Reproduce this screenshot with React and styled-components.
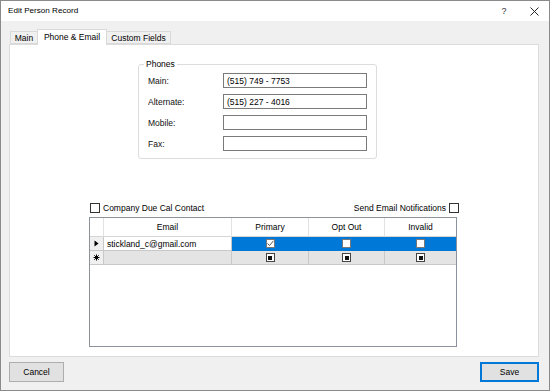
import React from "react";
import styled, { createGlobalStyle } from "styled-components";

const Global = createGlobalStyle`
  html, body { margin: 0; padding: 0; background: #fff; }
  body { font-family: "Liberation Sans", Arial, sans-serif; font-size: 8.5px; color: #000; }
  * { box-sizing: border-box; }
`;

const Win = styled.div`
  width: 550px; height: 391px; border: 1px solid #8a8a8a; background: #f0f0f0;
  display: flex; flex-direction: column;
`;
const TitleBar = styled.div`
  height: 20px; background: #fff; display: flex; align-items: center; padding: 0 0 0 7px;
  font-size: 8.1px; color: #000;
`;
const TitleText = styled.div` flex: 1; padding-bottom: 1px; `;
const TitleBtn = styled.div`
  width: 30px; display: flex; justify-content: center; align-items: center; font-size: 9px; color: #333;
`;
const Body = styled.div`
  flex: 1; display: flex; flex-direction: column; padding: 8px 10px 0 8px;
`;
const TabStrip = styled.div` display: flex; align-items: flex-end; height: 15px; padding-left: 1px; `;
const Tab = styled.div`
  height: ${p => (p.$active ? 16 : 13)}px;
  margin-bottom: ${p => (p.$active ? -1 : 0)}px;
  width: ${p => p.$w}px;
  border: 1px solid #d9d9d9; border-bottom: ${p => (p.$active ? "none" : "1px solid #d9d9d9")};
  margin-left: ${p => (p.$first ? 0 : -1)}px;
  background: ${p => (p.$active ? "#fff" : "#f0f0f0")};
  display: flex; align-items: center; justify-content: center;
  font-size: 8.5px; position: relative; z-index: ${p => (p.$active ? 2 : 1)};
  padding-bottom: ${p => (p.$active ? 2 : 0)}px;
`;
const Panel = styled.div`
  height: 313px; background: #fff; border: 1px solid #dcdcdc; position: relative; z-index: 1;
  display: flex; flex-direction: column;
`;
const Group = styled.fieldset`
  margin: 14px 0 0 128px; width: 239px; height: 100px; border: 1px solid #dcdcdc; border-radius: 3px;
  padding: 4px 0 0 9px; display: flex; flex-direction: column; gap: 6px;
`;
const Legend = styled.legend` padding: 0 2px; margin-left: -4px; font-size: 8.5px; color: #000; `;
const FieldRow = styled.div` display: flex; align-items: center; height: 15px; `;
const Label = styled.div` width: 75px; font-size: 8.5px; color: #111; `;
const Input = styled.div`
  width: 144px; height: 15px; border: 1px solid #7a7a7a; font-size: 8.5px;
  display: flex; align-items: center; padding-left: 3px;
`;
const CheckRow = styled.div`
  margin: 42px 0 0 80px; width: 369px; display: flex; justify-content: space-between; align-items: center;
  height: 13px;
`;
const CheckLabel = styled.label` display: flex; align-items: center; gap: 3px; font-size: 8.5px; `;
const Box = styled.span`
  width: 10px; height: 10px; border: 1px solid #333; background: #fff; display: inline-block;
`;
const Grid = styled.div`
  margin: 0 0 0 79px; margin-top: auto; margin-bottom: 9px; width: 368px; height: 130px;
  border: 1px solid #8c939c; background: #fff; display: flex; flex-direction: column;
`;
const GRow = styled.div`
  display: grid; grid-template-columns: 14px 128px 77px 76px 71px; height: ${p => p.$h}px;
  background: ${p => p.$bg || "transparent"};
`;
const HeadCell = styled.div`
  border-right: 1px solid #e2e2e2; border-bottom: 1px solid #d6d6d6; background: #fff;
  display: flex; align-items: center; justify-content: center; font-size: 8.5px;
  &:last-child { border-right: none; }
`;
const RowHead = styled.div`
  background: #f0f0f0; border-right: 1px solid #c8c8c8; border-bottom: 1px solid #c8c8c8;
  display: flex; align-items: center; justify-content: center; color: #000;
`;
const Cell = styled.div`
  background: ${p => p.$bg || "transparent"}; border-right: 1px solid ${p => p.$line || "#c8c8c8"};
  border-bottom: 1px solid ${p => p.$line || "#c8c8c8"};
  display: flex; align-items: center; justify-content: ${p => (p.$left ? "flex-start" : "center")};
  padding-left: ${p => (p.$left ? 3 : 0)}px; font-size: 8.5px;
  &:last-child { border-right: none; }
`;
const MiniBox = styled.span`
  width: 9px; height: 9px; background: #fff; border: 1px solid ${p => p.$c || "#444"};
  display: flex; align-items: center; justify-content: center;
`;
const Dot = styled.span` width: 4px; height: 4px; background: #111; `;
const Footer = styled.div`
  display: flex; justify-content: space-between; padding: 5px 0 0 0;
`;
const Button = styled.div`
  width: ${p => p.$w}px; height: 20px; background: #e1e1e1;
  border: ${p => (p.$default ? "2px solid #0078d7" : "1px solid #adadad")};
  display: flex; align-items: center; justify-content: center; font-size: 8.5px;
`;

const Check = () => (
  <svg width="7" height="7" viewBox="0 0 7 7"><path d="M0.5 3.5 L2.5 5.5 L6.5 0.8" fill="none" stroke="#555" strokeWidth="1" /></svg>
);
const Arrow = () => (
  <svg width="5" height="7" viewBox="0 0 5 7"><path d="M0.5 0.5 L4.5 3.5 L0.5 6.5 Z" fill="#000" /></svg>
);
const Star = () => (
  <svg width="7" height="7" viewBox="0 0 7 7">
    <path d="M3.5 0.5 V6.5 M0.5 3.5 H6.5 M1.3 1.3 L5.7 5.7 M5.7 1.3 L1.3 5.7" stroke="#000" strokeWidth="1" />
  </svg>
);
const CloseX = () => (
  <svg width="9" height="9" viewBox="0 0 9 9"><path d="M0.5 0.5 L8.5 8.5 M8.5 0.5 L0.5 8.5" stroke="#222" strokeWidth="1" /></svg>
);

export default function App() {
  return (
    <>
      <Global />
      <Win>
        <TitleBar>
          <TitleText>Edit Person Record</TitleText>
          <TitleBtn>?</TitleBtn>
          <TitleBtn><CloseX /></TitleBtn>
        </TitleBar>
        <Body>
          <TabStrip>
            <Tab $first $w={28}>Main</Tab>
            <Tab $active $w={70}>Phone &amp; Email</Tab>
            <Tab $w={65}>Custom Fields</Tab>
          </TabStrip>
          <Panel>
            <Group>
              <Legend>Phones</Legend>
              <FieldRow><Label>Main:</Label><Input>(515) 749 - 7753</Input></FieldRow>
              <FieldRow><Label>Alternate:</Label><Input>(515) 227 - 4016</Input></FieldRow>
              <FieldRow><Label>Mobile:</Label><Input /></FieldRow>
              <FieldRow><Label>Fax:</Label><Input /></FieldRow>
            </Group>
            <CheckRow>
              <CheckLabel><Box />Company Due Cal Contact</CheckLabel>
              <CheckLabel>Send Email Notifications<Box /></CheckLabel>
            </CheckRow>
            <Grid>
              <GRow $h={19}>
                <HeadCell />
                <HeadCell>Email</HeadCell>
                <HeadCell>Primary</HeadCell>
                <HeadCell>Opt Out</HeadCell>
                <HeadCell>Invalid</HeadCell>
              </GRow>
              <GRow $h={14}>
                <RowHead><Arrow /></RowHead>
                <Cell $left $bg="#fff">stickland_c@gmail.com</Cell>
                <Cell $bg="#0078d7" $line="#0078d7"><MiniBox $c="#777"><Check /></MiniBox></Cell>
                <Cell $bg="#0078d7" $line="#0078d7"><MiniBox $c="#777" /></Cell>
                <Cell $bg="#0078d7" $line="#0078d7"><MiniBox $c="#777" /></Cell>
              </GRow>
              <GRow $h={14}>
                <RowHead><Star /></RowHead>
                <Cell $bg="#e4e4e4" />
                <Cell $bg="#e4e4e4"><MiniBox><Dot /></MiniBox></Cell>
                <Cell $bg="#e4e4e4"><MiniBox><Dot /></MiniBox></Cell>
                <Cell $bg="#e4e4e4"><MiniBox><Dot /></MiniBox></Cell>
              </GRow>
            </Grid>
          </Panel>
          <Footer>
            <Button $w={55}>Cancel</Button>
            <Button $w={59} $default>Save</Button>
          </Footer>
        </Body>
      </Win>
    </>
  );
}
